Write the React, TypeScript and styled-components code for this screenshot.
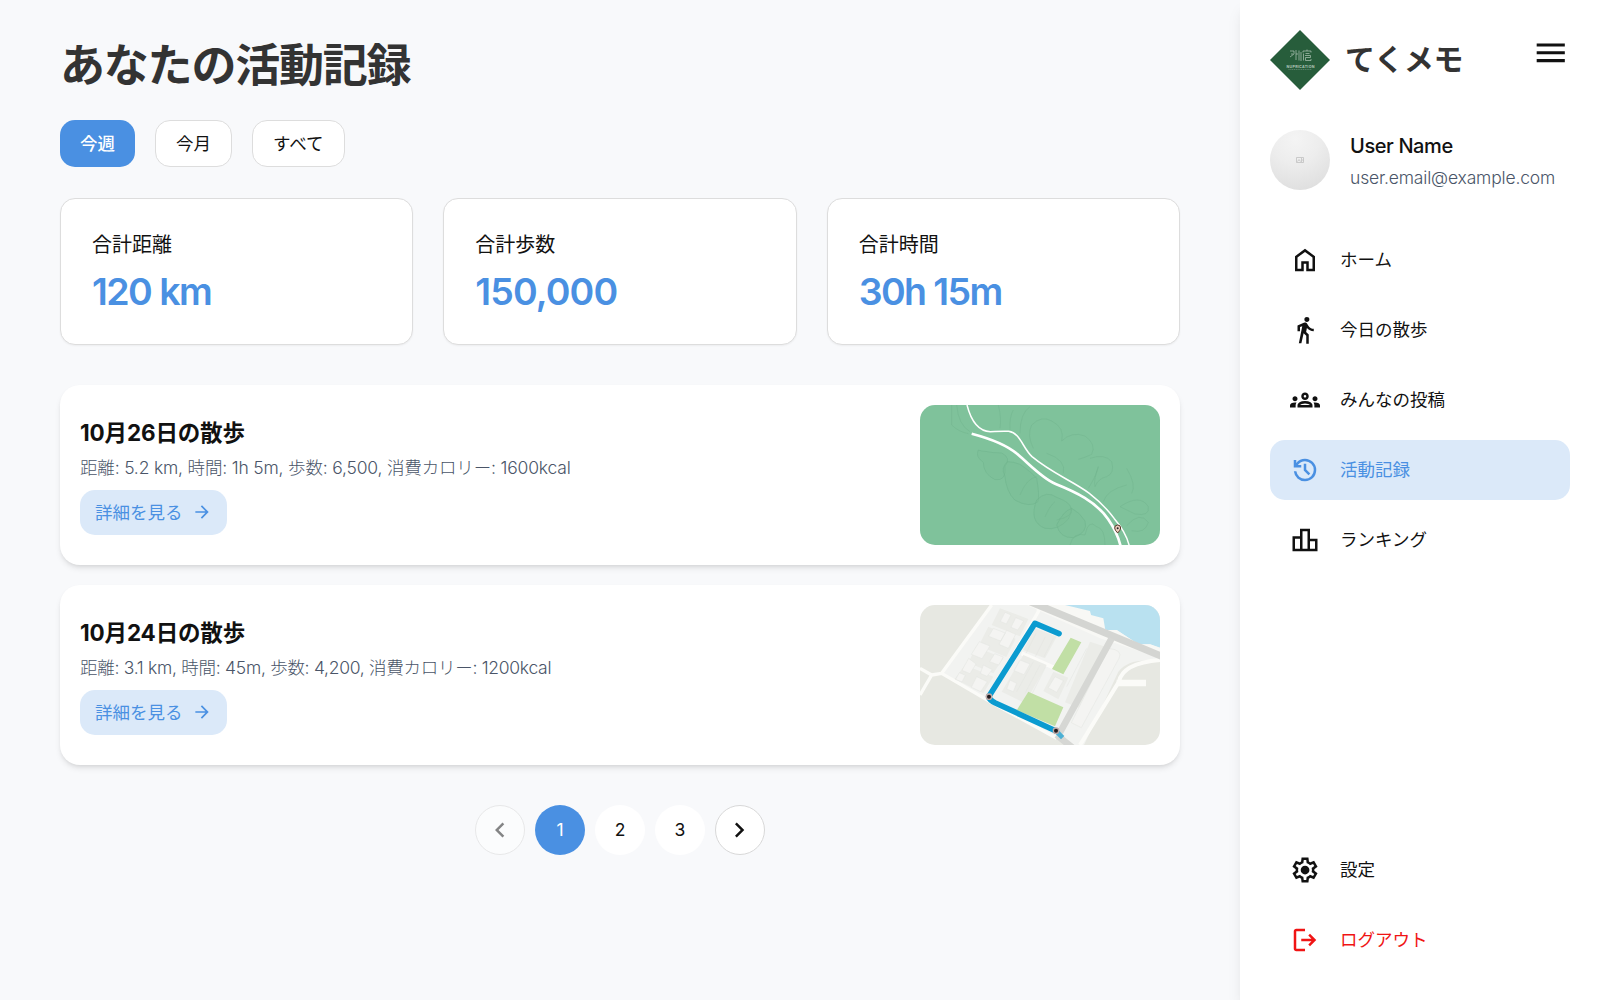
import React from "react";
import styled, { createGlobalStyle, css } from "styled-components";

const Global = createGlobalStyle`
  * { box-sizing: border-box; }
  html { font-size: 20px; }
  body {
    margin: 0;
    background: #f8f9fb;
    color: #111;
    font-family: Inter, "Noto Sans CJK JP", sans-serif;
    line-height: 1.5;
  }
  h1, h2, h3, p { margin: 0; }
  button { font: inherit; color: inherit; }
`;

const blue = "#4a90e2";
const paleBlue = "#dbe9f9";

const Page = styled.div`
  display: flex;
  height: 1000px;
  overflow: hidden;
`;

const Main = styled.main`
  flex: 1;
  min-width: 0;
  padding: 38px 60px 0;
`;

const Title = styled.h1`
  font-size: 45px;
  line-height: 56px;
  font-weight: 700;
  letter-spacing: -1.2px;
  color: #333;
`;

const Filters = styled.div`
  display: flex;
  gap: 20px;
  margin-top: 26px;
`;

const Filter = styled.button<{ $active?: boolean }>`
  height: 47px;
  padding: 0 20px;
  border: 1px solid #dddddd;
  border-radius: 15px;
  background: #fff;
  font-size: 17.5px;
  line-height: 25px;
  font-weight: 400;
  ${(p) =>
    p.$active &&
    css`
      border: 0;
      background: ${blue};
      color: #fff;
      font-weight: 500;
    `}
`;

const Stats = styled.section`
  display: grid;
  grid-template-columns: repeat(3, 1fr);
  gap: 30px;
  margin-top: 30.5px;
`;

const Stat = styled.div`
  display: flex;
  flex-direction: column;
  gap: 9px;
  height: 147px;
  padding: 31px 30px 30px 31px;
  border: 1px solid #dddddd;
  border-radius: 15px;
  background: #fff;
  box-shadow: 0 1px 2px rgba(0, 0, 0, 0.05);
`;

const StatLabel = styled.p`
  font-size: 20px;
  line-height: 30px;
  font-weight: 400;
`;

const StatValue = styled.p<{ $track: number }>`
  font-size: 37.5px;
  line-height: 45px;
  font-weight: 600;
  letter-spacing: ${(p) => p.$track}px;
  color: ${blue};
`;

const Walks = styled.section`
  display: flex;
  flex-direction: column;
  gap: 20px;
  margin-top: 40px;
`;

const Walk = styled.article`
  display: flex;
  justify-content: space-between;
  height: 180px;
  padding: 20px;
  border-radius: 20px;
  background: #fff;
  box-shadow: 0 4px 6px -1px rgba(0, 0, 0, 0.1), 0 2px 4px -2px rgba(0, 0, 0, 0.1);
`;

const WalkBody = styled.div`
  display: flex;
  flex-direction: column;
  align-items: flex-start;
  padding-top: 14px;
`;

const WalkTitle = styled.h2`
  font-size: 22.5px;
  line-height: 28px;
  font-weight: 700;
  letter-spacing: -0.15px;
`;

const WalkMeta = styled.p<{ $track: number }>`
  margin-top: 8px;
  font-size: 17.5px;
  line-height: 25px;
  font-weight: 300;
  letter-spacing: ${(p) => p.$track}px;
  color: #4a5568;
  white-space: nowrap;
`;

const Details = styled.button`
  display: flex;
  align-items: center;
  gap: 9.5px;
  height: 45px;
  margin-top: 10px;
  padding: 0 15px;
  border: 0;
  border-radius: 15px;
  background: ${paleBlue};
  color: ${blue};
  font-size: 17.5px;
  line-height: 25px;
  font-weight: 400;
`;

const MapSvg = styled.svg`
  display: block;
  width: 240px;
  height: 140px;
  border-radius: 15px;
`;

const Pager = styled.nav`
  display: flex;
  justify-content: center;
  gap: 10px;
  margin-top: 40px;
`;

const PageButton = styled.button<{ $kind?: "active" | "outline" | "disabled" }>`
  display: flex;
  align-items: center;
  justify-content: center;
  width: 50px;
  height: 50px;
  padding: 0;
  border: 0;
  border-radius: 50%;
  background: #fff;
  color: #111;
  font-size: 17.5px;
  line-height: 28px;
  font-weight: 400;
  ${(p) => p.$kind === "active" && css`background: ${blue}; color: #fff;`}
  ${(p) => (p.$kind === "outline" || p.$kind === "disabled") && css`border: 1px solid #d8d8d8;`}
  ${(p) => p.$kind === "disabled" && css`opacity: 0.5;`}
`;

const PageNumber = styled.span`
  padding-top: 1px;
`;

const Sidebar = styled.aside`
  display: flex;
  flex-direction: column;
  width: 360px;
  padding: 30px;
  background: #fff;
  box-shadow: 0 10px 15px -3px rgba(0, 0, 0, 0.1), 0 4px 6px -4px rgba(0, 0, 0, 0.1);
`;

const Brand = styled.div`
  display: flex;
  align-items: flex-start;
  height: 60px;
`;

const BrandName = styled.h3`
  flex: 1;
  margin-left: 15px;
  font-size: 30px;
  line-height: 59px;
  font-weight: 700;
  letter-spacing: -0.2px;
  color: #333;
`;

const MenuButton = styled.button`
  display: flex;
  margin: 3.5px 0.5px 0 0;
  padding: 0;
  border: 0;
  background: none;
`;

const User = styled.div`
  display: flex;
  gap: 20px;
  margin-top: 40px;
  height: 60px;
`;

const UserName = styled.p`
  margin-top: 1px;
  font-size: 20px;
  line-height: 30px;
  font-weight: 500;
  letter-spacing: -0.4px;
`;

const UserMail = styled.p`
  margin-top: 4px;
  font-size: 17.5px;
  line-height: 25px;
  font-weight: 300;
  color: #4a5568;
  letter-spacing: -0.17px;
`;

const Nav = styled.nav`
  display: flex;
  flex-direction: column;
  gap: 10px;
  margin-top: 40px;
`;

const FooterNav = styled(Nav)`
  margin-top: auto;
`;

const NavItem = styled.a<{ $tone?: "active" | "danger" }>`
  display: flex;
  align-items: center;
  gap: 20px;
  height: 60px;
  padding: 0 20px;
  border-radius: 15px;
  font-size: 17.5px;
  line-height: 25px;
  font-weight: 400;
  ${(p) => p.$tone === "active" && css`background: ${paleBlue}; color: ${blue};`}
  ${(p) => p.$tone === "danger" && css`color: #f01414;`}
`;

const NavLabel = styled.span`
  padding-bottom: 1.5px;
`;

const icons = {
  home: "M240-200h120v-240h240v240h120v-360L480-740 240-560v360Zm-80 80v-480l320-240 320 240v480H520v-240h-80v240H160Z",
  walk: "m280-40 112-564-72 28v136h-80v-188l202-86q14-6 29.5-7t29.5 4q14 5 26.5 14t20.5 23l40 64q26 42 70.5 69T760-520v80q-70 0-125-29t-94-74l-25 123 84 80v300h-80v-260l-84-80-72 320h-84Zm260-700q-33 0-56.5-23.5T460-820q0-33 23.5-56.5T540-900q33 0 56.5 23.5T620-820q0 33-23.5 56.5T540-740Z",
  groups:
    "M0-240v-63q0-43 44-70t116-27q13 0 25 .5t23 2.5q-14 21-21 44t-7 48v65H0Zm240 0v-65q0-32 17.5-58.5T307-410q32-20 76.5-30t96.5-10q53 0 97.5 10t76.5 30q32 20 49 46.5t17 58.5v65H240Zm540 0v-65q0-26-6.5-49T754-397q11-2 22.5-2.5t23.5-.5q72 0 116 26.5t44 70.5v63H780Zm-455-80h311q-10-20-55.5-35T480-370q-55 0-100.5 15T325-320ZM160-440q-33 0-56.5-23.5T80-520q0-34 23.5-57t56.5-23q34 0 57 23t23 57q0 33-23 56.5T160-440Zm640 0q-33 0-56.5-23.5T720-520q0-34 23.5-57t56.5-23q34 0 57 23t23 57q0 33-23 56.5T800-440Zm-320-40q-50 0-85-35t-35-85q0-51 35-85.5t85-34.5q51 0 85.5 34.5T600-600q0 50-34.5 85T480-480Zm0-80q17 0 28.5-11.5T520-600q0-17-11.5-28.5T480-640q-17 0-28.5 11.5T440-600q0 17 11.5 28.5T480-560Z",
  history:
    "M480-120q-138 0-240.5-91.5T122-440h82q14 104 92.5 172T480-200q117 0 198.5-81.5T760-480q0-117-81.5-198.5T480-760q-69 0-129 32t-101 88h110v80H120v-240h80v94q51-64 124.5-99T480-840q75 0 140.5 28.5t114 77q48.5 48.5 77 114T840-480q0 75-28.5 140.5t-77 114q-48.5 48.5-114 77T480-120Zm112-192L440-464v-216h80v184l128 128-56 56Z",
  ranking: "M160-200h160v-320H160v320Zm240 0h160v-560H400v560Zm240 0h160v-240H640v240ZM80-120v-480h240v-240h320v320h240v400H80Z",
  settings:
    "m370-80-16-128q-13-5-24.5-12T307-235l-119 50L78-375l103-78q-1-7-1-13.5v-27q0-6.5 1-13.5L78-585l110-190 119 50q11-8 23-15t24-12l16-128h220l16 128q13 5 24.5 12t22.5 15l119-50 110 190-103 78q1 7 1 13.5v27q0 6.5-2 13.5l103 78-110 190-118-50q-11 8-23 15t-24 12L590-80H370Zm70-80h79l14-106q31-8 57.5-23.5T639-327l99 41 39-68-86-65q5-14 7-29.5t2-31.5q0-16-2-31.5t-7-29.5l86-65-39-68-99 42q-22-23-48.5-38.5T533-694l-13-106h-79l-14 106q-31 8-57.5 23.5T321-633l-99-41-39 68 86 64q-5 15-7 30t-2 32q0 16 2 31t7 30l-86 65 39 68 99-42q22 23 48.5 38.5T427-266l13 106Zm42-180q58 0 99-41t41-99q0-58-41-99t-99-41q-59 0-99.5 41T342-480q0 58 40.5 99t99.5 41Z",
  logout:
    "M200-120q-33 0-56.5-23.5T120-200v-560q0-33 23.5-56.5T200-840h280v80H200v560h280v80H200Zm440-160-55-58 102-102H360v-80h327L585-622l55-58 200 200-200 200Z",
  menu: "M120-240v-80h720v80H120Zm0-200v-80h720v80H120Zm0-200v-80h720v80H120Z",
  left: "M560-240 320-480l240-240 56 56-184 184 184 184-56 56Z",
  right: "M504-480 320-664l56-56 240 240-240 240-56-56 184-184Z",
  arrow: "M647-440H160v-80h487L423-744l57-56 320 320-320 320-57-56 224-224Z",
};

const Icon = ({ name, size = 30 }: { name: keyof typeof icons; size?: number }) => (
  <svg width={size} height={size} viewBox="0 -960 960 960" fill="currentColor">
    <path d={icons[name]} />
  </svg>
);

const Logo = () => (
  <svg width="60" height="60" viewBox="0 0 60 60">
    <path d="M30 0 60 30 30 60 0 30Z" fill="#275d3b" />
    <g fill="none" stroke="#b4c8ba" strokeWidth=".7">
      <path d="M20 21h4v3l-4 3M21 24h2M26 20v10M26 24h2M29 20.500v10M31 22v9M33 22.500v-1.500h8v1.500M37 19.500v1.500M33.500 23.500v7M35.500 23.500h4M35 25.500h5.500v2h-5v3h5.500v-1.500" />
    </g>
    <text x="16.500" y="37.500" textLength="28" fontSize="3.600" fontWeight="700" fill="#b4c8ba">NUPRICATION</text>
    <path d="M18.500 39.500h23" stroke="#6f947d" strokeWidth=".7" strokeDasharray="1.200 .6" />
  </svg>
);

const Avatar = () => (
  <svg width="60" height="60" viewBox="0 0 60 60">
    <defs>
      <radialGradient id="av" cx=".42" cy=".15" r=".9">
        <stop offset="0" stopColor="#f4f4f4" />
        <stop offset=".45" stopColor="#ededed" />
        <stop offset="1" stopColor="#dedede" />
      </radialGradient>
    </defs>
    <circle cx="30" cy="30" r="30" fill="url(#av)" />
    <path d="M26.500 27.500h7v5h-7zM27.500 31.500l1.500-2 1.500 2M31.500 28v4M32 30h1.500" fill="none" stroke="#c0c0c0" strokeWidth=".8" />
  </svg>
);

const ForestMap = () => (
  <MapSvg viewBox="0 0 720 420">
    <rect width="720" height="420" fill="#7fc29b" />
    <g fill="#79bc94" fillOpacity=".3" stroke="#6fb28c" strokeWidth="1.500">
      <path d="M175 135q-10 20 15 37 0 35 35 52 35 5 30-40 20-25-10-40-25 0-50-5-10 0-20-4Z" />
      <path d="M262 170q-20 20-8 40 5 50 30 75 45 25 70 5 5-20-4-70-15-18-50-42-20-8-38-8Z" />
      <path d="M350 285q30-30 60-8 25 10 30 15 25 15 5 50-30 35-70 28-50-20-25-85Z" />
      <path d="M455 310q-25 8-45 50 10 40 50 38 45-15 35-50-15-25-40-38Z" />
    </g>
    <g fill="none" stroke="#73b58f" strokeWidth="1.500">
      <path d="M340 130q-20-40-5-70 30-30 60-12 40 20 30 60 30-30 70-15 35 25 20 55-20 10-40 15M510 160q45-15 65 10 10 35-15 45-25 5-35 30-5-20 10-60" />
      <path d="M95 0v60q20 20 50 26M110 0q5 60 40 80M235 0q10 40 5 70M270 75q-2-40 10-60M300 85q0-60 30-80M430 205q10-40-50-60M505 250q25-40 30-65M550 290q10-35 70-50M620 190q30 50 15 75M600 305q60-40 85 0 5 30-40 22-20-10-45-22ZM620 362q40-45 65-10-10 35-50 25M450 420q10-40 45-30 10-50 35-25 25 5 25 55M375 336q15-35 30-46M410 345q50-10 45-35M300 270q20-50 50-55" />
    </g>
    <g fill="none" stroke="#fff">
      <path d="M141 0q20 78 70 80 40-2 55-1c35 5 42 50 70 76 60 50 120 72 172 110q45 35 75 76 35 40 45 82" strokeWidth="4.500" />
      <path d="M155 86q95 25 137 61c40 34 75 73 115 90 60 24 120 52 157 105q28 40 38 82" strokeWidth="8" />
    </g>
    <path d="M593 384q-9-9-9-15a9 9 0 0 1 18 0q0 6-9 15Z" fill="#e9cdbd" stroke="#5e392b" strokeWidth="3" />
    <circle cx="593" cy="370" r="3" fill="#222" />
  </MapSvg>
);

const CityMap = () => (
  <MapSvg viewBox="0 0 720 420">
    <rect width="720" height="420" fill="#e7e8e2" />
    <path d="M215 0h505v170q-90-15-125 30L492 420h-35L210 290 65 208Z" fill="#f2f3f1" />
    <path d="M435 0h285v128l-30-10h-35l-65-43-30 0-40-25-10-25-75-20Z" fill="#b9e1f0" />
    <path d="M320 0h115l75 18 3 12 37 10 6 35 34 0 65 43h35l30 10v30L540 100Z" fill="#f8f8f5" />
    <g fill="none" stroke="#fbfbf8" strokeLinejoin="round">
      <path d="M0 190l35 20 30-5L215 0M35 210 0 270M65 205l145 85 200 110M355 0v20L205 280" strokeWidth="10" />
      <path d="M305 145l95 42M597 230 480 420M597 230q10-55 123-65" strokeWidth="12" />
      <path d="M590 234h88" strokeWidth="20" />
    </g>
    <g fill="#ebece8">
      <path d="M240 10l85 32-25 52-85-34ZM205 65l82 36-28 55-83-34ZM168 125l82 35-30 45-75-32ZM135 180l85 35-30 50-86-43ZM345 70l65 25-35 65-65-25ZM310 150l70 30-65 115-70-35ZM400 200l45 18-30 65-45-25ZM510 110l60 20-90 180-45-18Z" />
    </g>
    <g fill="#f4f4f2" stroke="#e3e4e0" strokeWidth="1.500">
      <path d="M255 22l18 8-14 27-18-8ZM287 38l24 10-18 27-20-8ZM220 70l36 14-14 24-36-14ZM260 76l27 12-22 42-28-12ZM178 110l32 13-24 38-32-13ZM224 146l26 10-14 24-27-10ZM146 160l22 17-18 29-24-10ZM190 180l27 14-16 20-20-9ZM170 215l32 15-20 30-28-13ZM118 203l18 8-10 20-19-8ZM300 165l30 12-18 32-30-12ZM270 225l20 10-10 25-20-8ZM405 215l25 12-20 35-25-14Z" />
      <path d="M565 130q45 5 32 30L484 368l-30-15ZM348 85l-30 60M376 95l-30 60M400 100l-28 55M340 170l-50 90M360 180l-45 85M377 185l-40 80M500 130l-60 115M525 180l-65 120" />
    </g>
    <path d="M452 98l32 14-54 96-34-16ZM325 260l105 47-25 57-115-48Z" fill="#c1dfa5" />
    <path d="M330-10l400 166" stroke="#d4d5d2" strokeWidth="22" fill="none" />
    <path d="M575 100 420 382M410 390l50 40" stroke="#d6d7d4" strokeWidth="20" fill="none" />
    <path d="M417 86 345 55 206 275q2 10 20 19l182 84" fill="none" stroke="#0b9bd0" strokeWidth="17" strokeLinejoin="round" strokeLinecap="round" />
    <path d="M408 378l20 20" fill="none" stroke="#4cb0d4" strokeWidth="14" />
    <g fill="#211b1e" stroke="#bcaaa9" strokeWidth="4">
      <circle cx="207" cy="275" r="8" />
      <circle cx="408" cy="377" r="8" />
    </g>
  </MapSvg>
);

const stats = [
  { label: "合計距離", value: "120 km", track: -1.55 },
  { label: "合計歩数", value: "150,000", track: -0.9 },
  { label: "合計時間", value: "30h 15m", track: -1.6 },
];

const walks = [
  { title: "10月26日の散歩", meta: "距離: 5.2 km, 時間: 1h 5m, 歩数: 6,500, 消費カロリー: 1600kcal", track: -0.18, map: <ForestMap /> },
  { title: "10月24日の散歩", meta: "距離: 3.1 km, 時間: 45m, 歩数: 4,200, 消費カロリー: 1200kcal", track: -0.28, map: <CityMap /> },
];

export default function App() {
  return (
    <Page>
      <Global />
      <Main>
        <Title>あなたの活動記録</Title>
        <Filters>
          <Filter $active>今週</Filter>
          <Filter>今月</Filter>
          <Filter>すべて</Filter>
        </Filters>
        <Stats>
          {stats.map((s) => (
            <Stat key={s.label}>
              <StatLabel>{s.label}</StatLabel>
              <StatValue $track={s.track}>{s.value}</StatValue>
            </Stat>
          ))}
        </Stats>
        <Walks>
          {walks.map((w) => (
            <Walk key={w.title}>
              <WalkBody>
                <WalkTitle>{w.title}</WalkTitle>
                <WalkMeta $track={w.track}>{w.meta}</WalkMeta>
                <Details>
                  詳細を見る
                  <Icon name="arrow" size={20} />
                </Details>
              </WalkBody>
              {w.map}
            </Walk>
          ))}
        </Walks>
        <Pager>
          <PageButton $kind="disabled"><Icon name="left" /></PageButton>
          <PageButton $kind="active"><PageNumber>1</PageNumber></PageButton>
          <PageButton><PageNumber>2</PageNumber></PageButton>
          <PageButton><PageNumber>3</PageNumber></PageButton>
          <PageButton $kind="outline"><Icon name="right" /></PageButton>
        </Pager>
      </Main>
      <Sidebar>
        <Brand>
          <Logo />
          <BrandName>てくメモ</BrandName>
          <MenuButton><Icon name="menu" size={37.5} /></MenuButton>
        </Brand>
        <User>
          <Avatar />
          <div>
            <UserName>User Name</UserName>
            <UserMail>user.email@example.com</UserMail>
          </div>
        </User>
        <Nav>
          <NavItem><Icon name="home" /><NavLabel>ホーム</NavLabel></NavItem>
          <NavItem><Icon name="walk" /><NavLabel>今日の散歩</NavLabel></NavItem>
          <NavItem><Icon name="groups" /><NavLabel>みんなの投稿</NavLabel></NavItem>
          <NavItem $tone="active"><Icon name="history" /><NavLabel>活動記録</NavLabel></NavItem>
          <NavItem><Icon name="ranking" /><NavLabel>ランキング</NavLabel></NavItem>
        </Nav>
        <FooterNav>
          <NavItem><Icon name="settings" /><NavLabel>設定</NavLabel></NavItem>
          <NavItem $tone="danger"><Icon name="logout" /><NavLabel>ログアウト</NavLabel></NavItem>
        </FooterNav>
      </Sidebar>
    </Page>
  );
}
